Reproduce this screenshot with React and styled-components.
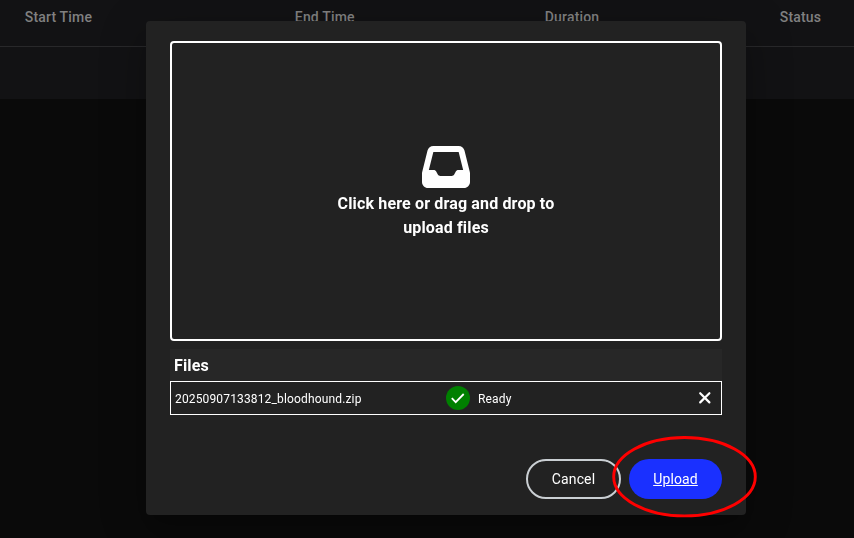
import React from "react";
import styled, { createGlobalStyle } from "styled-components";
import { FaInbox } from "react-icons/fa6";

const GlobalStyle = createGlobalStyle`
  *, *::before, *::after { box-sizing: border-box; }
  body {
    margin: 0;
    background: #0a0a0a;
    font-family: Roboto, sans-serif;
    color: #fff;
    overflow: hidden;
  }
`;

const Page = styled.main`
  height: 100vh;
  background: #0a0a0a;
`;

const TableHead = styled.div`
  display: grid;
  grid-template-columns: 270px 250px 235px 1fr;
  height: 47px;
  padding: 7px 0 0 24.8px;
  background: #121214;
  border-bottom: 1px solid #28282a;
`;

const HeadCell = styled.span`
  font-size: 14px;
  line-height: 20px;
  font-weight: 500;
  letter-spacing: 0.17px;
  color: #808080;
`;

const TableRow = styled.div`
  height: 52px;
  background: #121214;
`;

const Overlay = styled.div`
  position: fixed;
  inset: 0;
  display: flex;
  justify-content: center;
  align-items: flex-start;
  padding: 21px 0 0 38px;
`;

const Dialog = styled.section`
  width: 600px;
  height: 494px;
  display: flex;
  flex-direction: column;
  padding: 20px 24px 16px;
  background: #222;
  border-radius: 4px;
  box-shadow: 0 11px 15px -7px rgba(0, 0, 0, 0.2),
    0 24px 38px 3px rgba(0, 0, 0, 0.14), 0 9px 46px 8px rgba(0, 0, 0, 0.12);
`;

const DropZone = styled.div`
  height: 300px;
  display: flex;
  flex-direction: column;
  align-items: center;
  justify-content: center;
  border: 2px solid #fff;
  border-radius: 4px;

  svg {
    display: block;
  }
`;

const DropText = styled.p`
  width: 240px;
  margin: 1px 0 -1px;
  text-align: center;
  font-size: 16px;
  line-height: 24px;
  font-weight: 700;
  letter-spacing: 0.15px;
`;

const FilesTitle = styled.div`
  height: 32px;
  margin-top: 8px;
  padding: 5px 4px 3px;
  background: #272727;
  font-size: 16px;
  line-height: 24px;
  font-weight: 700;
  letter-spacing: 0.15px;
`;

const FileRow = styled.div`
  display: grid;
  grid-template-columns: 271px 1fr auto;
  align-items: center;
  height: 34px;
  padding: 0 8px 0 4px;
  border: 1px solid #fff;
  font-size: 12px;
  line-height: 16px;
  letter-spacing: 0.15px;
`;

const FileText = styled.span`
  padding-top: 1px;
`;

const FileStatus = styled.span`
  display: flex;
  align-items: center;
  gap: 8px;
`;

const StatusBadge = styled.span`
  width: 24px;
  height: 24px;
  border-radius: 50%;
  background: #008000;
`;

const RemoveButton = styled.button`
  display: flex;
  padding: 0;
  border: 0;
  background: none;
  color: #fff;
`;

const Actions = styled.div`
  display: flex;
  justify-content: flex-end;
  gap: 8px;
  margin-top: auto;
`;

const Button = styled.button`
  width: ${({ $primary }) => ($primary ? "93px" : "95px")};
  height: 40px;
  padding: 0;
  border: ${({ $primary }) => ($primary ? "0" : "2px solid #cacfd3")};
  border-radius: 20px;
  background: ${({ $primary }) => ($primary ? "#1a30ff" : "transparent")};
  color: #fff;
  font: 400 14px/20px Roboto, sans-serif;
  letter-spacing: 0.13px;
  text-decoration: ${({ $primary }) => ($primary ? "underline" : "none")};
`;

const Highlight = styled.svg`
  position: absolute;
  left: 610px;
  top: 434px;
  pointer-events: none;
`;

const columns = ["Start Time", "End Time", "Duration", "Status"];

export default function App() {
  return (
    <>
      <GlobalStyle />
      <Page>
        <TableHead>
          {columns.map((name) => (
            <HeadCell key={name}>{name}</HeadCell>
          ))}
        </TableHead>
        <TableRow />
      </Page>
      <Overlay>
        <Dialog role="dialog">
          <DropZone>
            <FaInbox size={48} />
            <DropText>Click here or drag and drop to upload files</DropText>
          </DropZone>
          <FilesTitle>Files</FilesTitle>
          <FileRow>
            <FileText>20250907133812_bloodhound.zip</FileText>
            <FileStatus>
              <StatusBadge>
                <svg width="24" height="24" viewBox="0 0 24 24" fill="none" stroke="#fff" strokeWidth="1.8">
                  <path d="M5.8 12.2 9.7 16.1 17.7 8" />
                </svg>
              </StatusBadge>
              <FileText>Ready</FileText>
            </FileStatus>
            <RemoveButton aria-label="Remove file">
              <svg width="16" height="16" viewBox="0 0 16 16" fill="none" stroke="currentColor" strokeWidth="2.2" strokeLinecap="round">
                <path d="M3.2 3.2 12.4 12.4M12.4 3.2 3.2 12.4" />
              </svg>
            </RemoveButton>
          </FileRow>
          <Actions>
            <Button>Cancel</Button>
            <Button $primary>Upload</Button>
          </Actions>
        </Dialog>
      </Overlay>
      <Highlight width="150" height="86" viewBox="0 0 150 86">
        <ellipse cx="74.5" cy="42.7" rx="70.8" ry="39.2" fill="none" stroke="#f00" strokeWidth="2.9" />
      </Highlight>
    </>
  );
}
